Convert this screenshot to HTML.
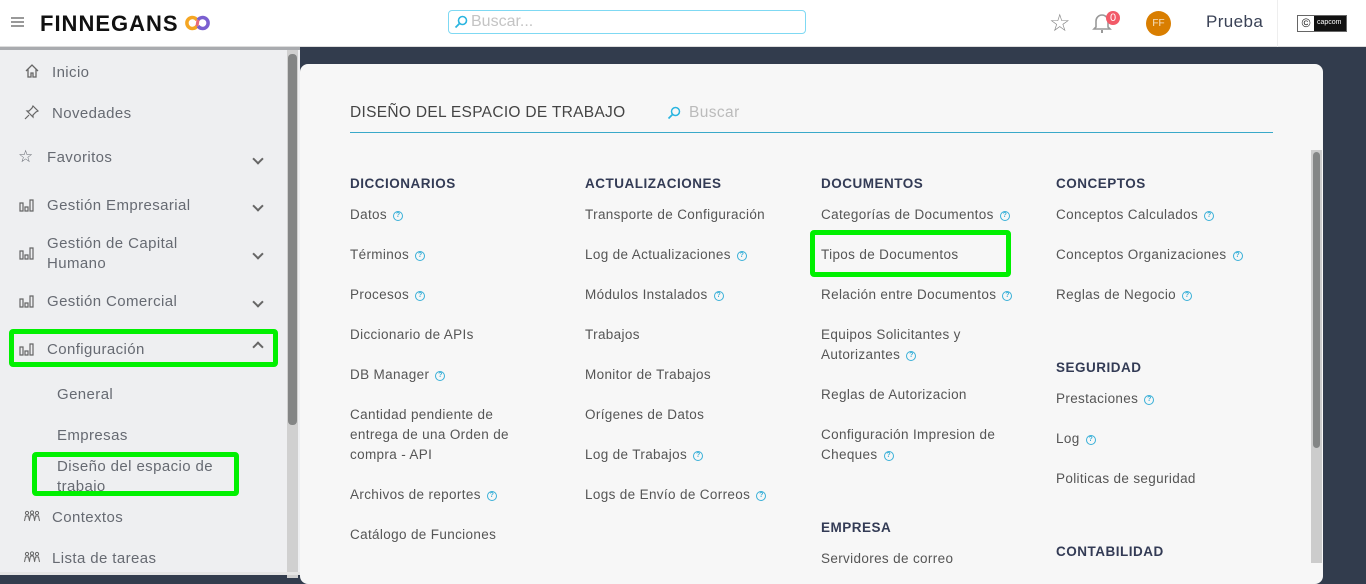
<!DOCTYPE html>
<html><head><meta charset="utf-8"><style>
*{margin:0;padding:0;box-sizing:border-box}
body{width:1366px;height:575px;overflow:hidden;background:#323c4d;font-family:"Liberation Sans",sans-serif;position:relative}
.a{position:absolute;white-space:nowrap}
#hdr{position:absolute;left:0;top:0;width:1366px;height:47px;background:#fff;border-bottom:1px solid #ddd}
#side{position:absolute;left:0;top:47px;width:300px;height:528px;background:#eeeff1;border-top:3px solid #a9abaf}
.si{position:absolute;font-size:15px;color:#666a72;letter-spacing:.4px;line-height:20px;transform:translateY(1px)}
.ic{position:absolute}
#panel{position:absolute;left:300px;top:64px;width:1023px;height:520px;background:#f7f7f7;border-radius:8px}
.h{position:absolute;font-size:13.5px;color:#333b55;letter-spacing:.5px;font-weight:bold;transform:translateY(1px)}
.it{position:absolute;font-size:13.5px;color:#555;letter-spacing:.35px;line-height:20px;transform:translateY(1px)}
.q{display:inline-block;width:10px;height:10px;border:1.3px solid #3ab0d8;border-radius:50%;font-size:7px;line-height:8px;text-align:center;color:#3ab0d8;vertical-align:2px;margin-left:6px;font-weight:bold;letter-spacing:0}
.g{position:absolute;border:5px solid #00f000;border-radius:4px}
.chev{position:absolute;width:8px;height:8px;border-right:2px solid #666;border-bottom:2px solid #666;transform:rotate(45deg)}
</style></head><body>
<div id="hdr">
 <div class="a" style="left:11px;top:17px;width:13px;height:2px;background:#999;box-shadow:0 4px 0 #999,0 8px 0 #999"></div>
 <div class="a" style="left:40px;top:11px;font-size:22px;font-weight:bold;color:#111;letter-spacing:1px">FINNEGANS</div>
 <svg class="a" style="left:184px;top:15px" width="28" height="16"><path d="M13 5 A5.5 5.5 0 1 0 13 11" fill="none" stroke="#f5a623" stroke-width="3.5"/><path d="M14 5 A5.5 5.5 0 1 1 14 11" fill="none" stroke="#7a5fd0" stroke-width="3.5"/><path d="M13 11 L14 5" stroke="#e86a7a" stroke-width="3"/></svg>
 <div class="a" style="left:448px;top:10px;width:358px;height:24px;border:1px solid #7fd9f3;border-radius:4px"></div>
 <svg class="a" style="left:454px;top:15px" width="14" height="14"><circle cx="8.5" cy="5.5" r="4" fill="none" stroke="#2ab5e0" stroke-width="1.6"/><line x1="5.5" y1="8.5" x2="1.5" y2="12.5" stroke="#2ab5e0" stroke-width="1.8"/></svg>
 <div class="a" style="left:471px;top:13px;font-size:16px;color:#c4c4c4">Buscar...</div>
 <div class="a" style="left:1049px;top:9px;font-size:24px;color:#8a8a8a">☆</div>
 <svg class="a" style="left:1092px;top:12px" width="20" height="22"><path d="M4 15 V9 a6 6 0 0 1 12 0 V15 L18 17 H2 Z" fill="none" stroke="#999" stroke-width="1.6"/><line x1="10" y1="18" x2="10" y2="21" stroke="#999" stroke-width="2"/></svg>
 <div class="a" style="left:1106px;top:11px;width:14px;height:14px;border-radius:50%;background:#f25a68;color:#fff;font-size:11px;text-align:center;line-height:14px">0</div>
 <div class="a" style="left:1146px;top:11px;width:25px;height:25px;border-radius:50%;background:#d97e00;color:#f6e3c6;font-size:10px;text-align:center;line-height:25px">FF</div>
 <div class="a" style="left:1206px;top:12px;font-size:17px;color:#3a4256;letter-spacing:.4px">Prueba</div>
 <div class="a" style="left:1277px;top:0;width:1px;height:47px;background:#eee"></div>
 <div class="a" style="left:1297px;top:15px;width:50px;height:17px;border:1px solid #666;background:#111"><div style="position:absolute;left:0;top:0;width:16px;height:15px;background:#fff;color:#111;font-size:12px;text-align:center;line-height:15px">©</div><div style="position:absolute;left:19px;top:3px;color:#fff;font-size:7px">capcom</div></div>
</div>
<div id="side">
 <div class="a" style="left:287px;top:0;width:11px;height:528px;background:#d0d0d0"></div>
 <div class="a" style="left:288px;top:4px;width:9px;height:371px;background:#838585;border-radius:4px"></div>
</div>
<svg class="ic" style="left:24px;top:63px" width="16" height="16"><path d="M2 8 L8 2 L14 8 M4 6 V14 H7 V10 H9 V14 H12 V6" fill="none" stroke="#666" stroke-width="1.3"/></svg>
<div class="si" style="left:52px;top:62px">Inicio</div>
<svg class="ic" style="left:24px;top:104px" width="16" height="16"><path d="M9 2 L14 7 L12 8 L9 11 L9 13 L3 7 L5 7 L8 4 Z M5 11 L1 15" fill="none" stroke="#666" stroke-width="1.2"/></svg>
<div class="si" style="left:52px;top:103px">Novedades</div>
<div class="si" style="left:18px;top:146px;font-size:17px">☆</div>
<div class="si" style="left:47px;top:147px">Favoritos</div>
<div class="chev" style="left:254px;top:155px"></div>
<div class="si" style="left:47px;top:195px">Gestión Empresarial</div>
<div class="chev" style="left:254px;top:202px"></div>
<div class="si" style="left:47px;top:233px">Gestión de Capital<br>Humano</div>
<div class="chev" style="left:254px;top:250px"></div>
<div class="si" style="left:47px;top:291px">Gestión Comercial</div>
<div class="chev" style="left:254px;top:298px"></div>
<div class="si" style="left:47px;top:339px">Configuración</div>
<div class="chev" style="left:254px;top:343px;transform:rotate(225deg)"></div>
<svg class="ic" style="left:19px;top:198px" width="16" height="14"><path d="M1 5h3v8H1zM6 9h3v4H6zM11 2h3v11h-3z" fill="none" stroke="#666" stroke-width="1.2"/></svg>
<svg class="ic" style="left:19px;top:246px" width="16" height="14"><path d="M1 5h3v8H1zM6 9h3v4H6zM11 2h3v11h-3z" fill="none" stroke="#666" stroke-width="1.2"/></svg>
<svg class="ic" style="left:19px;top:294px" width="16" height="14"><path d="M1 5h3v8H1zM6 9h3v4H6zM11 2h3v11h-3z" fill="none" stroke="#666" stroke-width="1.2"/></svg>
<svg class="ic" style="left:19px;top:342px" width="16" height="14"><path d="M1 5h3v8H1zM6 9h3v4H6zM11 2h3v11h-3z" fill="none" stroke="#666" stroke-width="1.2"/></svg>
<div class="si" style="left:57px;top:384px">General</div>
<div class="si" style="left:57px;top:425px">Empresas</div>
<div class="si" style="left:57px;top:456px;line-height:20px">Diseño del espacio de<br>trabajo</div>
<svg class="ic" style="left:24px;top:510px" width="16" height="12"><g fill="none" stroke="#666" stroke-width="1"><circle cx="3" cy="3" r="1.6"/><circle cx="8" cy="2.5" r="1.6"/><circle cx="13" cy="3" r="1.6"/><path d="M0.5 11 L1.5 6 H4.5 L5.5 11 M5.5 10 L6.5 5 H9.5 L10.5 10 M10.5 11 L11.5 6 H14.5 L15.5 11"/></g></svg>
<div class="si" style="left:52px;top:507px">Contextos</div>
<svg class="ic" style="left:24px;top:551px" width="16" height="12"><g fill="none" stroke="#666" stroke-width="1"><circle cx="3" cy="3" r="1.6"/><circle cx="8" cy="2.5" r="1.6"/><circle cx="13" cy="3" r="1.6"/><path d="M0.5 11 L1.5 6 H4.5 L5.5 11 M5.5 10 L6.5 5 H9.5 L10.5 10 M10.5 11 L11.5 6 H14.5 L15.5 11"/></g></svg>
<div class="si" style="left:52px;top:548px">Lista de tareas</div>
<div class="g" style="left:9px;top:329px;width:269px;height:38px"></div>
<div class="g" style="left:32px;top:452px;width:207px;height:44px"></div>
<div class="a" style="left:0;top:572px;width:300px;height:3px;background:#e5e5e5"></div>

<div id="panel">
 <div class="a" style="left:50px;top:40px;font-size:15.5px;color:#444;letter-spacing:.3px">DISEÑO DEL ESPACIO DE TRABAJO</div>
 <svg class="a" style="left:367px;top:42px" width="14" height="14"><circle cx="8.5" cy="5.5" r="4" fill="none" stroke="#2ab5e0" stroke-width="1.5"/><line x1="5.5" y1="8.5" x2="1.5" y2="12.5" stroke="#2ab5e0" stroke-width="1.7"/></svg>
 <div class="a" style="left:389px;top:40px;font-size:15.5px;color:#bbb;letter-spacing:.4px">Buscar</div>
 <div class="a" style="left:50px;top:68px;width:923px;height:1px;background:#3aa9c9"></div>
 <div class="a" style="left:1011px;top:86px;width:11px;height:413px;background:#ccc"></div>
 <div class="a" style="left:1013px;top:88px;width:7px;height:296px;background:#848686;border-radius:4px"></div>
</div>

<div class="h" style="left:350px;top:175px">DICCIONARIOS</div>
<div class="it" style="left:350px;top:204px">Datos<span class="q">?</span></div>
<div class="it" style="left:350px;top:244px">Términos<span class="q">?</span></div>
<div class="it" style="left:350px;top:284px">Procesos<span class="q">?</span></div>
<div class="it" style="left:350px;top:324px">Diccionario de APIs</div>
<div class="it" style="left:350px;top:364px">DB Manager<span class="q">?</span></div>
<div class="it" style="left:350px;top:404px">Cantidad pendiente de<br>entrega de una Orden de<br>compra - API</div>
<div class="it" style="left:350px;top:484px">Archivos de reportes<span class="q">?</span></div>
<div class="it" style="left:350px;top:524px">Catálogo de Funciones</div>

<div class="h" style="left:585px;top:175px">ACTUALIZACIONES</div>
<div class="it" style="left:585px;top:204px">Transporte de Configuración</div>
<div class="it" style="left:585px;top:244px">Log de Actualizaciones<span class="q">?</span></div>
<div class="it" style="left:585px;top:284px">Módulos Instalados<span class="q">?</span></div>
<div class="it" style="left:585px;top:324px">Trabajos</div>
<div class="it" style="left:585px;top:364px">Monitor de Trabajos</div>
<div class="it" style="left:585px;top:404px">Orígenes de Datos</div>
<div class="it" style="left:585px;top:444px">Log de Trabajos<span class="q">?</span></div>
<div class="it" style="left:585px;top:484px">Logs de Envío de Correos<span class="q">?</span></div>

<div class="h" style="left:821px;top:175px">DOCUMENTOS</div>
<div class="it" style="left:821px;top:204px">Categorías de Documentos<span class="q">?</span></div>
<div class="it" style="left:821px;top:244px">Tipos de Documentos</div>
<div class="it" style="left:821px;top:284px">Relación entre Documentos<span class="q">?</span></div>
<div class="it" style="left:821px;top:324px">Equipos Solicitantes y<br>Autorizantes<span class="q">?</span></div>
<div class="it" style="left:821px;top:384px">Reglas de Autorizacion</div>
<div class="it" style="left:821px;top:424px">Configuración Impresion de<br>Cheques<span class="q">?</span></div>
<div class="h" style="left:821px;top:519px">EMPRESA</div>
<div class="it" style="left:821px;top:548px">Servidores de correo</div>
<div class="g" style="left:810px;top:230px;width:201px;height:47px"></div>

<div class="h" style="left:1056px;top:175px">CONCEPTOS</div>
<div class="it" style="left:1056px;top:204px">Conceptos Calculados<span class="q">?</span></div>
<div class="it" style="left:1056px;top:244px">Conceptos Organizaciones<span class="q">?</span></div>
<div class="it" style="left:1056px;top:284px">Reglas de Negocio<span class="q">?</span></div>
<div class="h" style="left:1056px;top:359px">SEGURIDAD</div>
<div class="it" style="left:1056px;top:388px">Prestaciones<span class="q">?</span></div>
<div class="it" style="left:1056px;top:428px">Log<span class="q">?</span></div>
<div class="it" style="left:1056px;top:468px">Politicas de seguridad</div>
<div class="h" style="left:1056px;top:543px">CONTABILIDAD</div>
</body></html>
